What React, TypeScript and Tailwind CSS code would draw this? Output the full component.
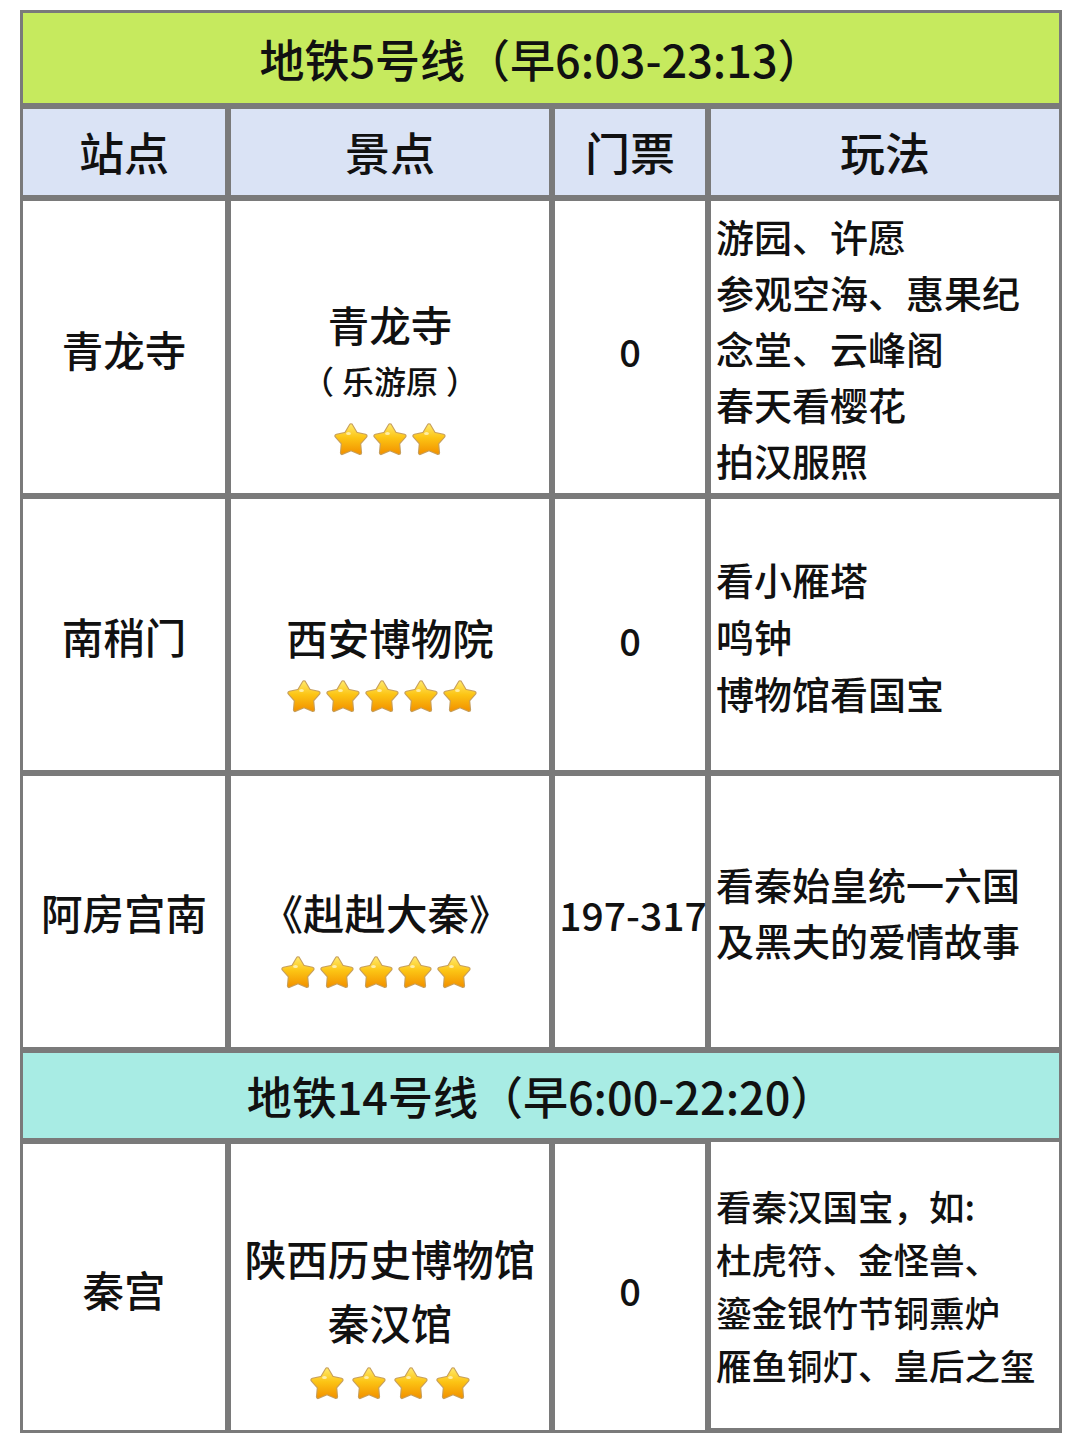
import React, { useId } from "react";

const FONT = { fontFamily: '"Noto Sans CJK SC", "Noto Sans", sans-serif' };

function starPoints(cx: number, cy: number, R: number, r: number) {
  const pts: string[] = [];
  for (let i = 0; i < 10; i++) {
    const ang = (-90 + i * 36) * (Math.PI / 180);
    const rad = i % 2 === 0 ? R : r;
    pts.push(`${(cx + rad * Math.cos(ang)).toFixed(2)},${(cy + rad * Math.sin(ang)).toFixed(2)}`);
  }
  return pts.join(" ");
}

function Star() {
  const id = useId().replace(/:/g, "");
  const pts = starPoints(17, 18.6, 15, 8.3);
  return (
    <svg width="34" height="34" viewBox="0 0 34 34">
      <defs>
        <linearGradient id={`g${id}`} x1="0" y1="0" x2="0" y2="1">
          <stop offset="0" stopColor="#ffe560" />
          <stop offset="0.45" stopColor="#fcc414" />
          <stop offset="1" stopColor="#f39500" />
        </linearGradient>
      </defs>
      <polygon points={pts} fill="#c79f5c" stroke="#c79f5c" strokeWidth="4.6" strokeLinejoin="round" />
      <polygon points={pts} fill={`url(#g${id})`} stroke={`url(#g${id})`} strokeWidth="2.4" strokeLinejoin="round" />
      <ellipse cx="14.5" cy="11.5" rx="2.4" ry="1.5" fill="#fff3b8" opacity="0.85" />
    </svg>
  );
}

function Stars({ n, cls }: { n: number; cls: string }) {
  return (
    <div className={`flex justify-center -mb-[48px] h-[34px] ${cls}`}>
      {Array.from({ length: n }).map((_, i) => (
        <Star key={i} />
      ))}
    </div>
  );
}

const cell = "bg-white flex items-center justify-center text-[#111]";
const head = "h-[86px] bg-[#dae3f5] flex items-center justify-center text-[45px] text-[#111]";

export default function App() {
  return (
    <div className="bg-white w-[1080px] h-[1440px] pt-[10px] pl-[20px] font-medium" style={FONT}>
      <div className="w-[1042px] bg-[#7a7a7a] p-[3px] grid grid-cols-[202px_318px_150px_348px] gap-[6px]">
        {/* Line 5 title */}
        <div className="col-span-4 h-[90px] bg-[#c6ea5e] flex items-center justify-center text-[45px] text-[#111] leading-none">
          地铁5号线（早6:03-23:13）
        </div>
        {/* header */}
        <div className={head}>站点</div>
        <div className={head}>景点</div>
        <div className={head}>门票</div>
        <div className={head}>玩法</div>

        {/* row 1 */}
        <div className={`${cell} h-[292px] text-[41.5px] pt-[4px]`}>青龙寺</div>
        <div className={`${cell} h-[292px] flex-col pt-[10px]`}>
          <div className="text-[41.5px] leading-[56px]">青龙寺</div>
          <div className="text-[32px] leading-[56px]">
            <span className="mr-[8px]">（</span>乐游原<span className="ml-[8px]">）</span>
          </div>
          <Stars n={3} cls="gap-[5px] mt-[14px]" />
        </div>
        <div className={`${cell} h-[292px] text-[38px] pt-[6px]`}>0</div>
        <div className="bg-white h-[292px] flex flex-col justify-center pl-[5px] text-[38px] leading-[56px] text-[#111] pt-[2px]">
          <div>游园、许愿</div>
          <div>参观空海、惠果纪</div>
          <div>念堂、云峰阁</div>
          <div>春天看樱花</div>
          <div>拍汉服照</div>
        </div>

        {/* row 2 */}
        <div className={`${cell} h-[271px] text-[41.5px] pt-[4px]`}>南稍门</div>
        <div className={`${cell} h-[271px] flex-col pt-[4px]`}>
          <div className="text-[41.5px] leading-[56px]">西安博物院</div>
          <Stars n={5} cls="gap-[5px] mt-[14px] ml-[-16px]" />
        </div>
        <div className={`${cell} h-[271px] text-[38px] pt-[10px]`}>0</div>
        <div className="bg-white h-[271px] flex flex-col justify-center pl-[5px] text-[38px] leading-[57px] text-[#111] pt-[2px]">
          <div>看小雁塔</div>
          <div>鸣钟</div>
          <div>博物馆看国宝</div>
        </div>

        {/* row 3 */}
        <div className={`${cell} h-[271px] text-[41.5px] pt-[2px]`}>阿房宫南</div>
        <div className={`${cell} h-[271px] flex-col pt-[2px]`}>
          <div className="text-[41.5px] leading-[56px] -ml-[8px]">《赳赳大秦》</div>
          <Stars n={5} cls="gap-[5px] mt-[15px] ml-[-28px]" />
        </div>
        <div className={`${cell} h-[271px] text-[39px] pt-[6px] pl-[6px] whitespace-nowrap`}>197-317</div>
        <div className="bg-white h-[271px] flex flex-col justify-center pl-[5px] text-[38px] leading-[56px] text-[#111]">
          <div>看秦始皇统一六国</div>
          <div>及黑夫的爱情故事</div>
        </div>

        {/* Line 14 title */}
        <div className="col-span-4 h-[85px] bg-[#a8ece4] flex items-center justify-center text-[45px] text-[#111] leading-none">
          地铁14号线（早6:00-22:20）
        </div>

        {/* row 4 */}
        <div className={`${cell} h-[286px] text-[41.5px] pt-[4px]`}>秦宫</div>
        <div className={`${cell} h-[286px] flex-col pt-[4px]`}>
          <div className="text-[41.5px] leading-[64px]">陕西历史博物馆</div>
          <div className="text-[41.5px] leading-[64px]">秦汉馆</div>
          <Stars n={4} cls="gap-[8px] mt-[12px]" />
        </div>
        <div className={`${cell} h-[286px] text-[38px] pt-[4px]`}>0</div>
        <div className="bg-white h-[286px] flex flex-col justify-center pl-[5px] text-[35.5px] leading-[53px] text-[#111] -mt-[2px]">
          <div>看秦汉国宝，如:</div>
          <div>杜虎符、金怪兽、</div>
          <div>鎏金银竹节铜熏炉</div>
          <div>雁鱼铜灯、皇后之玺</div>
        </div>
      </div>
    </div>
  );
}
